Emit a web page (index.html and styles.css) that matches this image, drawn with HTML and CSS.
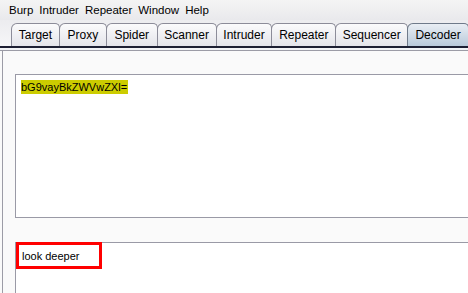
FILE: index.html
```html
<!DOCTYPE html>
<html lang="en">
<head>
  <meta charset="UTF-8" />
  <title>Burp Suite - Decoder</title>
  <link rel="stylesheet" href="styles.css">
</head>
<body>

  <!-- Menu bar -->
  <div class="menubar">
    <span>Burp</span>
    <span>Intruder</span>
    <span>Repeater</span>
    <span>Window</span>
    <span>Help</span>
  </div>

  <!-- Tabs -->
  <div class="tabstrip">
    <div class="tab">Target</div>
    <div class="tab">Proxy</div>
    <div class="tab">Spider</div>
    <div class="tab">Scanner</div>
    <div class="tab">Intruder</div>
    <div class="tab">Repeater</div>
    <div class="tab">Sequencer</div>
    <div class="tab active">Decoder</div>
  </div>
  <div class="tabline"></div>

  <!-- Decoder panel -->
  <div class="panel">
    <div class="textarea top">
      <span class="hl">bG9vayBkZWVwZXl=</span>
    </div>
    <div class="textarea bottom">
      <span class="boxed">look deeper</span>
    </div>
  </div>

</body>
</html>
```

FILE: styles.css
```css
* {
  box-sizing: border-box;
}

body {
  margin: 0;
  width: 468px;
  height: 293px;
  overflow: hidden;
  font-family: "Liberation Sans", Arial, sans-serif;
  font-size: 12px;
  color: #000;
  background: #fafafa;
}

.menubar {
  height: 20px;
  display: flex;
  align-items: center;
  gap: 6px;
  padding-left: 9px;
  font-size: 11.5px;
  background: linear-gradient(#f4f4f4, #e9e9ec);
}

.tabstrip {
  height: 26px;
  display: flex;
  align-items: flex-end;
  padding-left: 11px;
  background: linear-gradient(#ececef, #f6f6f8);
}

.tab {
  height: 23px;
  padding: 4px 0 0;
  text-align: center;
  border: 1px solid #8c8c99;
  border-bottom: none;
  border-radius: 6px 5px 0 0;
  margin-right: -1px;
  background: linear-gradient(#fbfbfc, #e4e4ea);
}

.tab:nth-child(1) { width: 49px; }
.tab:nth-child(2) { width: 48px; }
.tab:nth-child(3) { width: 52px; }
.tab:nth-child(4) { width: 60px; }
.tab:nth-child(5) { width: 57px; }
.tab:nth-child(6) { width: 65px; }
.tab:nth-child(7) { width: 73px; }
.tab:nth-child(8) { width: 62px; }

.tab.active {
  background: linear-gradient(#e9eef4, #b9c9da);
  border-color: #6f7a8a;
}

.tabline {
  height: 5px;
  border-top: 2px solid #1d1f33;
  border-bottom: 1px solid #9c9ca6;
  background: #f2f3f6;
}

.panel {
  height: 242px;
  margin-left: 2px;
  border-left: 1px solid #9c9ca6;
  background: #fafafa;
  padding: 23px 0 0 12px;
  display: flex;
  flex-direction: column;
  gap: 24px;
  font-size: 11px;
}

.textarea {
  background: #fff;
  border: 1px solid #9a9aa6;
  border-right: none;
  padding: 5px 5px;
}

.textarea.top {
  height: 144px;
}

.textarea.bottom {
  flex: 1;
  border-bottom: none;
  padding: 0;
}

.hl {
  display: inline-block;
  height: 14px;
  line-height: 14px;
  background: #cccc00;
  padding: 0 1px 0 0;
}

.boxed {
  display: inline-block;
  width: 86px;
  height: 27px;
  margin-top: -1px;
  border: 3px solid #ff0000;
  padding: 5px 0 0 3px;
}
```
